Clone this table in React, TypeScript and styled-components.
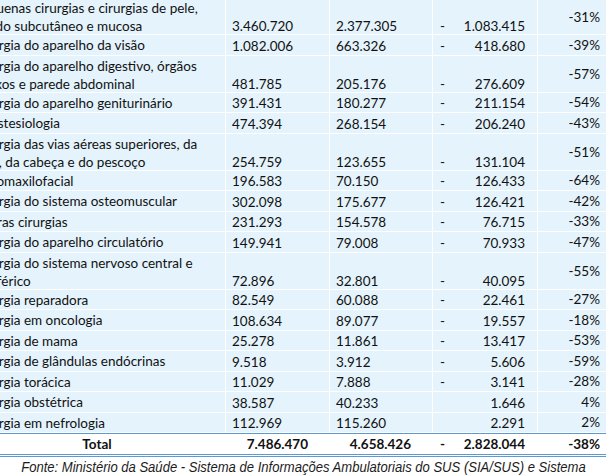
import React from 'react';
import styled, { createGlobalStyle } from 'styled-components';

const GlobalStyle = createGlobalStyle`
  body {
    margin: 0;
    background: #ffffff;
  }
`;

const Frame = styled.div`
  width: 606px;
  height: 475px;
  overflow: hidden;
  background: #ffffff;
  font-family: Lato, "Liberation Sans", sans-serif;
  font-size: 13.5px;
  color: #111;
`;

// the sheet is cropped on the left and top in the screenshot
const Sheet = styled.div`
  width: 637px;
  margin-left: -31px;
  margin-top: -2px;
`;

const COLS = '257px 104px 103px 105px 68px';

const Row = styled.div<{ $tall?: boolean }>`
  display: grid;
  grid-template-columns: ${COLS};
  box-sizing: border-box;
  height: ${(p) => (p.$tall ? 37 : 20.5)}px;
  background: #e4f3fc;
  border-bottom: 1px solid #ffffff;
`;

const TotalRow = styled.div`
  display: grid;
  grid-template-columns: ${COLS};
  box-sizing: border-box;
  height: 24px;
  background: #ffffff;
  border-top: 1px solid #5b9bd5;
  border-bottom: 3px double #5b9bd5;
  font-weight: 700;
`;

const Cell = styled.div<{ $v?: 'top' | 'middle' | 'bottom'; $h?: 'left' | 'center' | 'right' }>`
  display: flex;
  flex-direction: column;
  justify-content: ${(p) => (p.$v === 'top' ? 'flex-start' : p.$v === 'middle' ? 'center' : 'flex-end')};
  align-items: ${(p) => (p.$h === 'right' ? 'flex-end' : p.$h === 'center' ? 'center' : 'flex-start')};
  box-sizing: border-box;
  border-right: 1px solid #ffffff;
  line-height: 18px;
  white-space: nowrap;
`;

const Label = styled(Cell)`
  padding: ${(p) => (p.$v === 'top' ? '1px' : '0')} 5px 0;
`;

const Num = styled(Cell)<{ $pad?: number }>`
  padding: 0 ${(p) => p.$pad ?? 6}px 0 6px;
`;

const Diff = styled.div<{ $middle?: boolean }>`
  display: flex;
  justify-content: space-between;
  align-items: ${(p) => (p.$middle ? 'center' : 'flex-end')};
  box-sizing: border-box;
  border-right: 1px solid #ffffff;
  padding: 0 12px 0 7px;
  line-height: 18px;
`;

const Pct = styled(Cell)`
  padding-right: 6px;
  border-right: none;
`;

const Source = styled.div`
  display: flex;
  justify-content: center;
  padding-top: 1px;
`;

const SourceText = styled.span`
  font-family: "Liberation Sans Narrow", "Liberation Sans", Arial, sans-serif;
  font-style: italic;
  font-size: 15px;
  line-height: 17px;
  color: #1c1c1c;
  white-space: nowrap;
  transform: scaleX(0.87);
  transform-origin: center;
`;

type Item = {
  lines: string[];
  a: string;
  b: string;
  diff: string;
  neg: boolean;
  pct: string;
};

const rows: Item[] = [
  { lines: ['Pequenas cirurgias e cirurgias de pele,', 'tecido subcutâneo e mucosa'], a: '3.460.720', b: '2.377.305', diff: '1.083.415', neg: true, pct: '-31%' },
  { lines: ['Cirurgia do aparelho da visão'], a: '1.082.006', b: '663.326', diff: '418.680', neg: true, pct: '-39%' },
  { lines: ['Cirurgia do aparelho digestivo, órgãos', 'anexos e parede abdominal'], a: '481.785', b: '205.176', diff: '276.609', neg: true, pct: '-57%' },
  { lines: ['Cirurgia do aparelho geniturinário'], a: '391.431', b: '180.277', diff: '211.154', neg: true, pct: '-54%' },
  { lines: ['Anestesiologia'], a: '474.394', b: '268.154', diff: '206.240', neg: true, pct: '-43%' },
  { lines: ['Cirurgia das vias aéreas superiores, da', 'face, da cabeça e do pescoço'], a: '254.759', b: '123.655', diff: '131.104', neg: true, pct: '-51%' },
  { lines: ['Bucomaxilofacial'], a: '196.583', b: '70.150', diff: '126.433', neg: true, pct: '-64%' },
  { lines: ['Cirurgia do sistema osteomuscular'], a: '302.098', b: '175.677', diff: '126.421', neg: true, pct: '-42%' },
  { lines: ['Outras cirurgias'], a: '231.293', b: '154.578', diff: '76.715', neg: true, pct: '-33%' },
  { lines: ['Cirurgia do aparelho circulatório'], a: '149.941', b: '79.008', diff: '70.933', neg: true, pct: '-47%' },
  { lines: ['Cirurgia do sistema nervoso central e', 'periférico'], a: '72.896', b: '32.801', diff: '40.095', neg: true, pct: '-55%' },
  { lines: ['Cirurgia reparadora'], a: '82.549', b: '60.088', diff: '22.461', neg: true, pct: '-27%' },
  { lines: ['Cirurgia em oncologia'], a: '108.634', b: '89.077', diff: '19.557', neg: true, pct: '-18%' },
  { lines: ['Cirurgia de mama'], a: '25.278', b: '11.861', diff: '13.417', neg: true, pct: '-53%' },
  { lines: ['Cirurgia de glândulas endócrinas'], a: '9.518', b: '3.912', diff: '5.606', neg: true, pct: '-59%' },
  { lines: ['Cirurgia torácica'], a: '11.029', b: '7.888', diff: '3.141', neg: true, pct: '-28%' },
  { lines: ['Cirurgia obstétrica'], a: '38.587', b: '40.233', diff: '1.646', neg: false, pct: '4%' },
  { lines: ['Cirurgia em nefrologia'], a: '112.969', b: '115.260', diff: '2.291', neg: false, pct: '2%' },
];

const App = () => (
  <Frame>
    <GlobalStyle />
    <Sheet>
      {rows.map((r) => (
        <Row key={r.lines[0]} $tall={r.lines.length > 1}>
          <Label $v="top">
            {r.lines.map((l) => (
              <span key={l}>{l}</span>
            ))}
          </Label>
          <Num>{r.a}</Num>
          <Num>{r.b}</Num>
          <Diff>
            <span>{r.neg ? '-' : ''}</span>
            <span>{r.diff}</span>
          </Diff>
          <Pct $v="middle" $h="right">
            {r.pct}
          </Pct>
        </Row>
      ))}
      <TotalRow>
        <Label $v="middle" $h="center">Total</Label>
        <Num $v="middle" $h="right" $pad={21}>7.486.470</Num>
        <Num $v="middle" $h="right" $pad={21}>4.658.426</Num>
        <Diff $middle>
          <span>-</span>
          <span>2.828.044</span>
        </Diff>
        <Pct $v="middle" $h="right">-38%</Pct>
      </TotalRow>
    </Sheet>
    <Source>
      <SourceText>
        Fonte: Ministério da Saúde - Sistema de Informações Ambulatoriais do SUS (SIA/SUS) e Sistema
      </SourceText>
    </Source>
  </Frame>
);

export default App;
